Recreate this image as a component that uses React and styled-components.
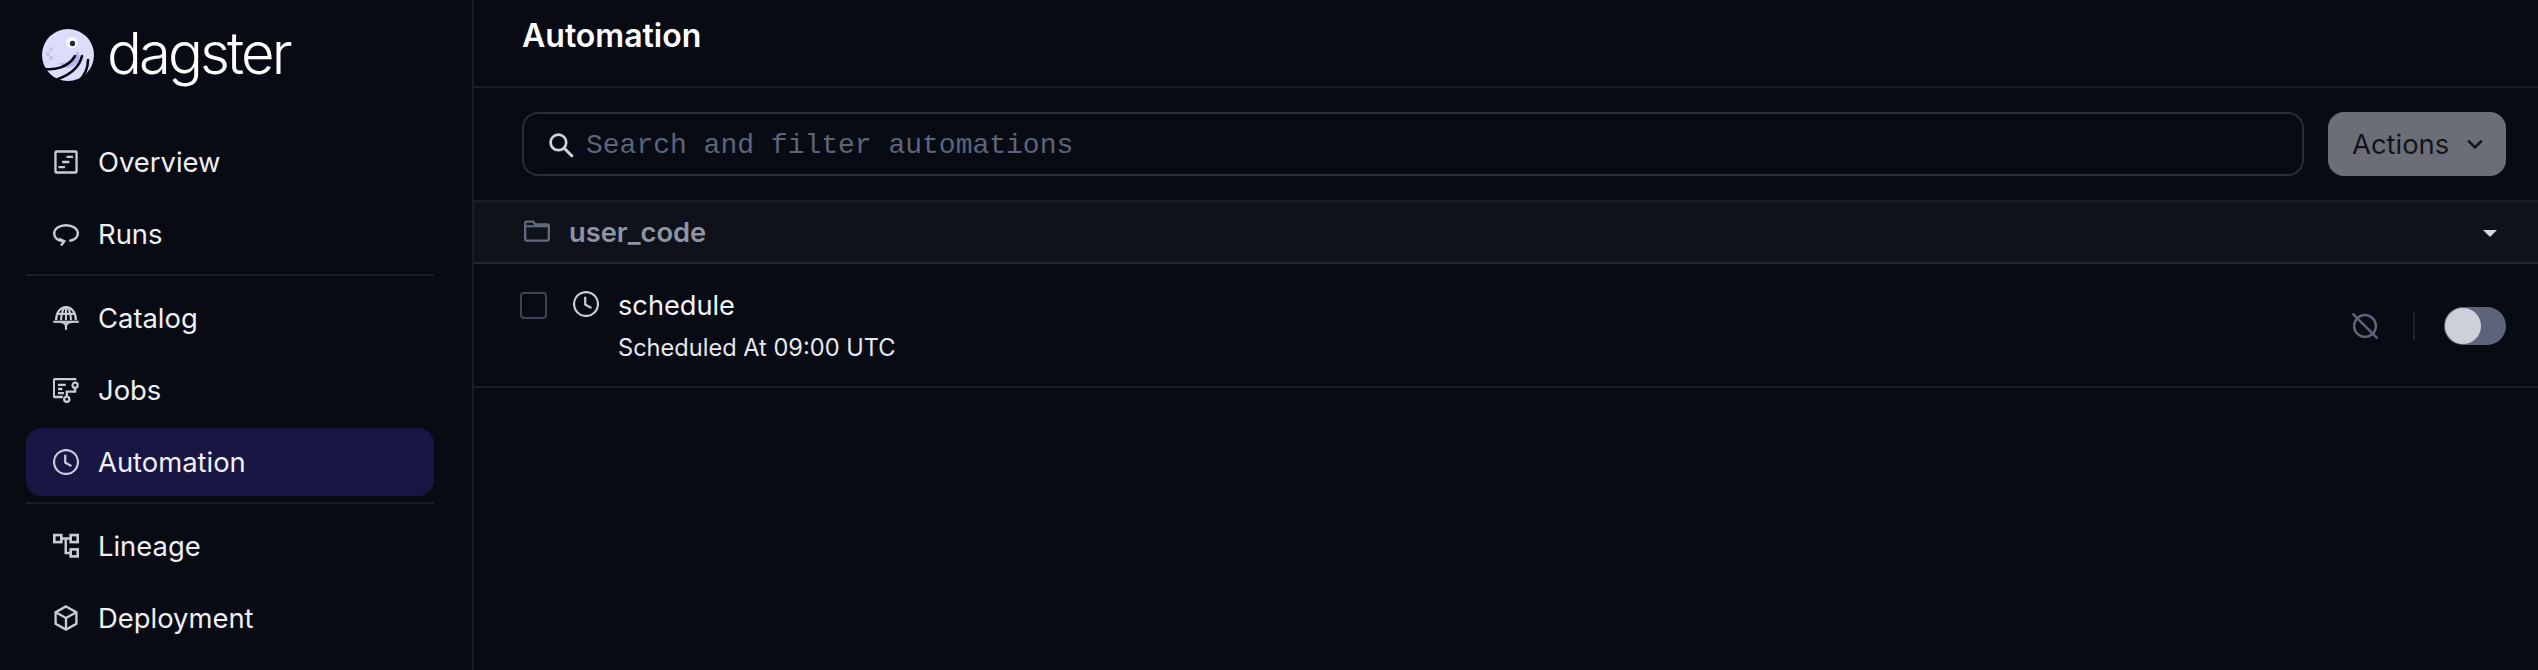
import React from "react";
import styled, { createGlobalStyle } from "styled-components";

const Global = createGlobalStyle`
  html, body { margin: 0; padding: 0; height: 100%; background: #080b14; overflow: hidden; }
  * { box-sizing: border-box; }
`;

const Page = styled.div`
  display: flex;
  height: 100vh;
  background: #080b14;
  color: #ffffff;
  font-family: Inter, "Liberation Sans", sans-serif;
`;

const Sidebar = styled.aside`
  flex: 0 0 474px;
  padding: 0 38px 0 26px;
  border-right: 2px solid #1a1d29;
`;

const LogoRow = styled.div`
  height: 128px;
  padding: 26px 0 0 15px;
  display: flex;
  align-items: flex-start;
  gap: 12px;
`;

const LogoText = styled.span`
  font-size: 58px;
  line-height: 54px;
  font-weight: 300;
  letter-spacing: -2.9px;
  color: #ffffff;
`;

const NavGroup = styled.nav`
  display: flex;
  flex-direction: column;
  gap: 4px;
`;

const NavItem = styled.a`
  height: 68px;
  padding-left: 27px;
  display: flex;
  align-items: center;
  gap: 19px;
  border-radius: 16px;
  font-size: 27.4px;
  color: #eef0f4;
  background: ${(p) => (p.$active ? "#191644" : "transparent")};
`;

const NavDivider = styled.div`
  height: 2px;
  margin: 6px 0 8px;
  background: #1a1d29;
`;

const IconBox = styled.svg`
  flex: none;
  width: 26px;
  height: 26px;
  fill: none;
  stroke: ${(p) => p.$color || "#c9ccd6"};
`;

const Main = styled.main`
  flex: 1;
  min-width: 0;
`;

const Header = styled.header`
  height: 88px;
  padding: 16px 48px 0;
  border-bottom: 2px solid #1a1d29;
`;

const Title = styled.h1`
  margin: 0;
  font-size: 32px;
  line-height: 40px;
  font-weight: 600;
  color: #ffffff;
`;

const Toolbar = styled.div`
  display: flex;
  gap: 24px;
  padding: 24px 32px 24px 48px;
`;

const SearchBox = styled.div`
  flex: 1;
  height: 64px;
  padding: 2px 0 0 24px;
  display: flex;
  align-items: center;
  gap: 12px;
  border: 2px solid #2a2e3c;
  border-radius: 16px;
  font-family: "Liberation Mono", monospace;
  font-size: 28px;
  color: #5d6479;
`;

const ActionsButton = styled.button`
  width: 178px;
  height: 64px;
  padding: 0 0 0 24px;
  display: flex;
  align-items: center;
  gap: 13px;
  border: 0;
  border-radius: 16px;
  background: #6c6e77;
  color: #12141d;
  font-family: inherit;
  font-size: 27.4px;
`;

const GroupRow = styled.div`
  height: 64px;
  padding: 0 32px 0 50px;
  display: flex;
  align-items: center;
  gap: 19px;
  background: #10121b;
  border-top: 2px solid #1a1d29;
  border-bottom: 2px solid #23262f;
  font-size: 27.3px;
  font-weight: 600;
  color: #8f94a3;
`;

const Caret = styled.span`
  margin-left: auto;
  margin-right: 9px;
  margin-top: 2px;
  border-style: solid;
  border-width: 7px 7px 0;
  border-color: #d6d8e0 transparent transparent;
`;

const Row = styled.div`
  height: 124px;
  padding: 27px 32px 0 46px;
  display: flex;
  align-items: flex-start;
  border-bottom: 2px solid #1a1d29;
`;

const Checkbox = styled.span`
  flex: none;
  width: 27px;
  height: 27px;
  margin-top: 1px;
  border: 2px solid #3d4354;
  border-radius: 4px;
`;

const RowIcon = styled.div`
  margin: 0 19px 0 26px;
  height: 26px;
`;

const RowText = styled.div`
  display: flex;
  flex-direction: column;
  gap: 13px;
`;

const RowName = styled.div`
  font-size: 27.2px;
  line-height: 30px;
  color: #f1f2f5;
`;

const RowSub = styled.div`
  font-size: 23.6px;
  line-height: 28px;
  color: #e6e8ed;
`;

const RowActions = styled.div`
  margin-left: auto;
  margin-top: 16px;
  display: flex;
  align-items: center;
`;

const VSep = styled.span`
  width: 2px;
  height: 28px;
  margin: 0 29px 0 35px;
  background: #1f2330;
`;

const Toggle = styled.span`
  width: 62px;
  height: 38px;
  padding: 1px;
  display: flex;
  border-radius: 19px;
  background: #5d6479;
`;

const Knob = styled.span`
  width: 36px;
  height: 36px;
  border-radius: 50%;
  background: #cdd0da;
`;

const OverviewIcon = () => (
  <IconBox viewBox="0 0 20 20">
    <rect x="1.9" y="1.9" width="16.2" height="16.2" rx="0.8" strokeWidth="1.8" />
    <path d="M10.4 6h5M7 10h5.6M4.2 14h5" strokeWidth="1.8" />
  </IconBox>
);

const RunsIcon = () => (
  <IconBox viewBox="0 0 20 20">
    <path d="M7.6 15.4C3.4 15 .9 12.6.9 9.4c0-3.4 4-6.2 9.1-6.2s9.1 2.8 9.1 6.2c0 3-2.7 5.3-6.6 5.9" strokeWidth="1.9" />
    <path d="M4.6 13.7l4 1.9-2.4 3.2" strokeWidth="1.9" />
  </IconBox>
);

const CatalogIcon = () => (
  <IconBox viewBox="0 0 20 20">
    <path d="M2.4 11.5C2.4 5.6 5.8 1.6 10 1.6s7.6 4 7.6 9.9" strokeWidth="1.7" />
    <path d="M6.2 11.5C6.2 6.4 8 1.8 10 1.6c2 .2 3.8 4.8 3.8 9.9M10 1.6v9.9M3.2 6.8h13.6" strokeWidth="1.6" />
    <path d="M.2 12.9h19.6" strokeWidth="1.7" />
    <path d="M5.4 12.9c1.8 0 3.8 1 4.6 2.8.8-1.8 2.8-2.8 4.6-2.8M10 15.4v3.6" strokeWidth="1.7" />
  </IconBox>
);

const JobsIcon = () => (
  <IconBox viewBox="0 0 20 20">
    <path d="M18 1.6H1.6a1 1 0 0 0-1 1v11.8a1 1 0 0 0 1 1H7.6" strokeWidth="1.8" />
    <path d="M3.8 6h6M3.8 9.2h3.4M3.8 12.4h4.6" strokeWidth="1.8" />
    <circle cx="17" cy="6.4" r="2" strokeWidth="1.7" />
    <circle cx="10.6" cy="17.2" r="2" strokeWidth="1.7" />
    <path d="M17 8.4v2.8h-6.4v4" strokeWidth="1.8" />
  </IconBox>
);

const ClockIcon = () => (
  <IconBox viewBox="0 0 20 20">
    <circle cx="10" cy="10" r="9.2" strokeWidth="1.7" />
    <path d="M9.4 4.4v6l4.8 2.8" strokeWidth="1.7" />
  </IconBox>
);

const LineageIcon = () => (
  <IconBox viewBox="0 0 20 20">
    <rect x="1" y="1.6" width="5.4" height="5.4" strokeWidth="2" />
    <rect x="13.6" y="1.6" width="5.4" height="5.4" strokeWidth="2" />
    <rect x="13.6" y="12.6" width="5.4" height="5.4" strokeWidth="2" />
    <path d="M6.4 4.3h7.2M9.8 4.3v11h3.8" strokeWidth="1.9" />
  </IconBox>
);

const BoxIcon = () => (
  <IconBox viewBox="0 0 20 20">
    <path d="M10 1.1l8 4.5v8.8l-8 4.5-8-4.5V5.6z" strokeWidth="1.8" />
    <path d="M2 5.6L10 10l8-4.4M10 10v8.9" strokeWidth="1.8" />
  </IconBox>
);

const SearchIcon = () => (
  <IconBox viewBox="0 0 20 20" $color="#d0d3dc">
    <circle cx="8" cy="8" r="6" strokeWidth="2.1" />
    <path d="M12.3 12.3l6.7 6.7" strokeWidth="2.3" />
  </IconBox>
);

const ChevronIcon = () => (
  <IconBox viewBox="0 0 20 20" $color="#12141d">
    <path d="M4.8 7.4L10 12.6l5.2-5.2" strokeWidth="2" />
  </IconBox>
);

const FolderIcon = () => (
  <IconBox viewBox="0 0 20 20" $color="#636a7e">
    <path d="M.9 3a1 1 0 0 1 1-1h5l2 2.2h9.2a1 1 0 0 1 1 1v10.4a1 1 0 0 1-1 1H1.9a1 1 0 0 1-1-1z" strokeWidth="1.8" />
    <path d="M.9 5.6h18" strokeWidth="1.6" />
  </IconBox>
);

const NoEvalIcon = () => (
  <IconBox viewBox="0 0 20 20" $color="#5d6479">
    <circle cx="10" cy="10" r="8.4" strokeWidth="1.9" />
    <path d="M.4.4l19.2 19.2" strokeWidth="1.9" />
  </IconBox>
);

const LogoMark = () => (
  <svg width="54" height="54" viewBox="0 0 54 54" style={{ flex: "none", marginTop: 3 }}>
    <circle cx="27" cy="26" r="26" fill="#dedcfb" />
    <path d="M17 34C26 35 34 30 36 22C42 26 38 38 26 39Z" fill="#b9b5ee" />
    <g fill="none" stroke="#080b14" strokeWidth="2.6" strokeLinecap="round">
      <path d="M4 40C13 41 27 39 34 27" />
      <path d="M17 50C28 46 38 40 41 27" />
      <path d="M38 52C44 46 47 39 47 31" />
    </g>
    <path d="M0 40C1 50 9 54 17 54C6 52 3 46 4 41Z" fill="#080b14" />
    <circle cx="31" cy="13.5" r="5.6" fill="#ffffff" />
    <circle cx="31.5" cy="14.5" r="2.7" fill="#24264a" />
    <g fill="#c3bff0">
      <circle cx="10" cy="20" r="2" />
      <circle cx="7" cy="25" r="2" />
      <circle cx="10" cy="29" r="2" />
    </g>
  </svg>
);

export default function App() {
  return (
    <Page>
      <Global />
      <Sidebar>
        <LogoRow>
          <LogoMark />
          <LogoText>dagster</LogoText>
        </LogoRow>
        <NavGroup>
          <NavItem><OverviewIcon />Overview</NavItem>
          <NavItem><RunsIcon />Runs</NavItem>
        </NavGroup>
        <NavDivider />
        <NavGroup>
          <NavItem><CatalogIcon />Catalog</NavItem>
          <NavItem><JobsIcon />Jobs</NavItem>
          <NavItem $active><ClockIcon />Automation</NavItem>
        </NavGroup>
        <NavDivider />
        <NavGroup>
          <NavItem><LineageIcon />Lineage</NavItem>
          <NavItem><BoxIcon />Deployment</NavItem>
        </NavGroup>
      </Sidebar>
      <Main>
        <Header>
          <Title>Automation</Title>
        </Header>
        <Toolbar>
          <SearchBox>
            <SearchIcon />
            Search and filter automations
          </SearchBox>
          <ActionsButton>
            Actions
            <ChevronIcon />
          </ActionsButton>
        </Toolbar>
        <GroupRow>
          <FolderIcon />
          user_code
          <Caret />
        </GroupRow>
        <Row>
          <Checkbox />
          <RowIcon><ClockIcon /></RowIcon>
          <RowText>
            <RowName>schedule</RowName>
            <RowSub>Scheduled At 09:00 UTC</RowSub>
          </RowText>
          <RowActions>
            <NoEvalIcon />
            <VSep />
            <Toggle><Knob /></Toggle>
          </RowActions>
        </Row>
      </Main>
    </Page>
  );
}
